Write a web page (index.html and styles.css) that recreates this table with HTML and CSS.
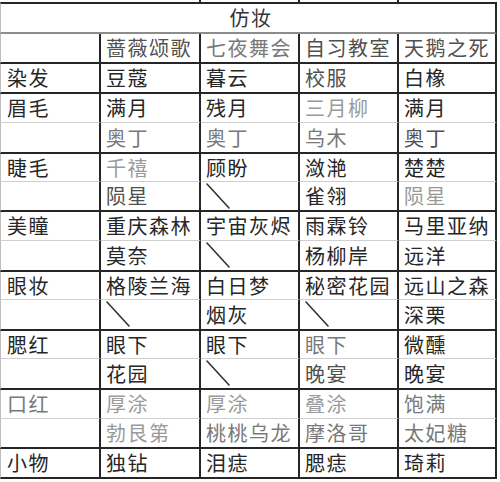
FILE: index.html
```html
<!DOCTYPE html>
<html lang="zh">
<head>
<meta charset="utf-8">
<title>仿妆</title>
<link rel="stylesheet" href="styles.css">
</head>
<body>
<div class="sheet">
  <div class="row stub"><div class="c"></div><div class="c"></div><div class="c"></div><div class="c"></div><div class="c"></div></div>

  <div class="row mid"><div class="c title">仿妆</div></div>

  <div class="row thick">
    <div class="c"></div>
    <div class="c g1">蔷薇颂歌</div>
    <div class="c g2">七夜舞会</div>
    <div class="c g1">自习教室</div>
    <div class="c g1">天鹅之死</div>
  </div>

  <div class="row thick">
    <div class="c k">染发</div>
    <div class="c k">豆蔻</div>
    <div class="c k">暮云</div>
    <div class="c g1">校服</div>
    <div class="c k">白橡</div>
  </div>

  <div class="row thin">
    <div class="c k">眉毛</div>
    <div class="c k">满月</div>
    <div class="c k">残月</div>
    <div class="c g3">三月柳</div>
    <div class="c k">满月</div>
  </div>
  <div class="row thick">
    <div class="c"></div>
    <div class="c g2">奥丁</div>
    <div class="c g2">奥丁</div>
    <div class="c g2">乌木</div>
    <div class="c g1">奥丁</div>
  </div>

  <div class="row thin">
    <div class="c k">睫毛</div>
    <div class="c g3">千禧</div>
    <div class="c k">顾盼</div>
    <div class="c k">潋滟</div>
    <div class="c k">楚楚</div>
  </div>
  <div class="row thick">
    <div class="c"></div>
    <div class="c g1">陨星</div>
    <div class="c"><svg class="slash" viewBox="0 0 24 26" width="24" height="26"><line x1="1" y1="1" x2="23" y2="25"/></svg></div>
    <div class="c k">雀翎</div>
    <div class="c g3">陨星</div>
  </div>

  <div class="row thin">
    <div class="c k">美瞳</div>
    <div class="c k">重庆森林</div>
    <div class="c k">宇宙灰烬</div>
    <div class="c k">雨霖铃</div>
    <div class="c k">马里亚纳</div>
  </div>
  <div class="row thick">
    <div class="c"></div>
    <div class="c k">莫奈</div>
    <div class="c"><svg class="slash" viewBox="0 0 24 26" width="24" height="26"><line x1="1" y1="1" x2="23" y2="25"/></svg></div>
    <div class="c k">杨柳岸</div>
    <div class="c k">远洋</div>
  </div>

  <div class="row thin">
    <div class="c k">眼妆</div>
    <div class="c k">格陵兰海</div>
    <div class="c k">白日梦</div>
    <div class="c k">秘密花园</div>
    <div class="c k">远山之森</div>
  </div>
  <div class="row thick">
    <div class="c"></div>
    <div class="c"><svg class="slash" viewBox="0 0 24 26" width="24" height="26"><line x1="1" y1="1" x2="23" y2="25"/></svg></div>
    <div class="c k">烟灰</div>
    <div class="c"><svg class="slash" viewBox="0 0 24 26" width="24" height="26"><line x1="1" y1="1" x2="23" y2="25"/></svg></div>
    <div class="c k">深栗</div>
  </div>

  <div class="row thin">
    <div class="c k">腮红</div>
    <div class="c k">眼下</div>
    <div class="c k">眼下</div>
    <div class="c g2">眼下</div>
    <div class="c k">微醺</div>
  </div>
  <div class="row thick">
    <div class="c"></div>
    <div class="c k">花园</div>
    <div class="c"><svg class="slash" viewBox="0 0 24 26" width="24" height="26"><line x1="1" y1="1" x2="23" y2="25"/></svg></div>
    <div class="c g1">晚宴</div>
    <div class="c k">晚宴</div>
  </div>

  <div class="row thin">
    <div class="c g2">口红</div>
    <div class="c g3">厚涂</div>
    <div class="c g3">厚涂</div>
    <div class="c g3">叠涂</div>
    <div class="c g2">饱满</div>
  </div>
  <div class="row thick">
    <div class="c"></div>
    <div class="c g3">勃艮第</div>
    <div class="c g2">桃桃乌龙</div>
    <div class="c g2">摩洛哥</div>
    <div class="c g2">太妃糖</div>
  </div>

  <div class="row thick">
    <div class="c k">小物</div>
    <div class="c k">独钻</div>
    <div class="c k">泪痣</div>
    <div class="c k">腮痣</div>
    <div class="c k">琦莉</div>
  </div>
</div>
</body>
</html>
```

FILE: styles.css
```css
html, body {
  margin: 0;
  padding: 0;
  background: #ffffff;
}

.sheet {
  display: grid;
  grid-template-columns: 101px 100px 99px 99px 98px;
  grid-template-rows: 2px 32px 30px 30px 29px 31px 28px 30px 29px 31px 28px 31px 28px 31px 29px 30px 30px;
  width: 497px;
  font-family: "Noto Sans CJK SC", "Noto Sans", sans-serif;
  font-size: 20px;
  letter-spacing: 1.5px;
  line-height: 24px;
  color: #222;
}

.row {
  display: contents;
}

.c {
  box-sizing: border-box;
  display: flex;
  align-items: center;
  min-height: 0;
  padding-left: 5px;
  border-right: 2px solid #262626;
  white-space: nowrap;
}

.row > .c:first-child {
  border-left: 1px solid #bdbdbd;
  padding-left: 6px;
}

.row.stub > .c:first-child {
  border-left: none;
  border-right: none;
}

.row.stub > .c:last-child {
  border-right: none;
}

.row.thin > .c {
  border-bottom: 1px solid #cfcfcf;
}

.row.thick > .c {
  border-bottom: 2px solid #262626;
}

.row.mid > .c {
  border-top: 2px solid #262626;
  border-bottom: 2px solid #8c8c8c;
}

.title {
  grid-column: 1 / -1;
  justify-content: center;
  padding-left: 0;
  color: #333;
}

.k  { color: #262626; }
.g1 { color: #505050; }
.g2 { color: #787878; }
.g3 { color: #9a9a9a; }

.slash {
  align-self: flex-start;
  margin-top: 1px;
  display: block;
}

.slash line {
  stroke: #333;
  stroke-width: 1.6;
  stroke-linecap: round;
}
```
